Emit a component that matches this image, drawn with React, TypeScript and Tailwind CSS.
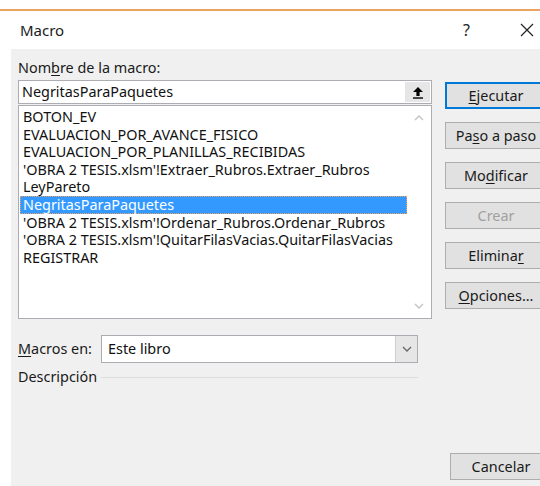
import React from "react";

const macros = [
  "BOTON_EV",
  "EVALUACION_POR_AVANCE_FISICO",
  "EVALUACION_POR_PLANILLAS_RECIBIDAS",
  "'OBRA 2 TESIS.xlsm'!Extraer_Rubros.Extraer_Rubros",
  "LeyPareto",
  "NegritasParaPaquetes",
  "'OBRA 2 TESIS.xlsm'!Ordenar_Rubros.Ordenar_Rubros",
  "'OBRA 2 TESIS.xlsm'!QuitarFilasVacias.QuitarFilasVacias",
  "REGISTRAR",
];

const selected = "NegritasParaPaquetes";

function Btn({
  children,
  primary,
  disabled,
}: {
  children: React.ReactNode;
  primary?: boolean;
  disabled?: boolean;
}) {
  return (
    <div
      className={
        "h-[27px] w-[102px] shrink-0 flex items-center justify-center bg-[#e1e1e1] " +
        (primary ? "border-2 border-[#0078d7]" : "border border-[#adadad]") +
        (disabled ? " text-[#a0a0a0]" : " text-[#1a1a1a]")
      }
    >
      {children}
    </div>
  );
}

function ChevronUp() {
  return (
    <svg width="10" height="6" viewBox="0 0 10 6" fill="none">
      <path d="M1 5 L5 1 L9 5" stroke="#c2c2c2" strokeWidth="1.3" />
    </svg>
  );
}

function ChevronDown({ color = "#c2c2c2" }: { color?: string }) {
  return (
    <svg width="10" height="6" viewBox="0 0 10 6" fill="none">
      <path d="M1 1 L5 5 L9 1" stroke={color} strokeWidth="1.3" />
    </svg>
  );
}

export default function App() {
  return (
    <div
      className="w-[540px] h-[486px] bg-white overflow-hidden flex flex-col text-[14.4px] text-[#111]"
      style={{ fontFamily: '"Noto Sans", "Open Sans", sans-serif' }}
    >
      <div className="h-[9px] shrink-0 bg-white" />
      <div className="h-[2px] shrink-0 bg-[#eaa460]" />
      {/* title bar */}
      <div className="h-[38px] shrink-0 flex items-center pl-[20px] pr-[6px]">
        <span className="text-[15px] text-[#1b1b1b]">Macro</span>
        <span className="ml-auto mr-[50px] text-[16px] text-[#222]">?</span>
        <svg width="14" height="14" viewBox="0 0 14 14">
          <path d="M1 1 L13 13 M13 1 L1 13" stroke="#222" strokeWidth="1.2" />
        </svg>
      </div>

      {/* dialog body */}
      <div className="flex-1 ml-[11px] bg-[#f0f0f0] flex pl-[7px] pt-[9px]">
        <div className="w-[414px] shrink-0 flex flex-col">
          <div className="h-[20px] leading-[20px] text-[#1a1a1a]">
            Nom<span className="underline underline-offset-2">b</span>re de la macro:
          </div>
          <div className="mt-[2px] h-[24px] border border-[#abadb3] bg-white flex items-center">
            <span className="pl-[3px] flex-1">NegritasParaPaquetes</span>
            <div className="w-[25px] h-[20px] mr-[1px] bg-[#e6e6e6] flex items-center justify-center">
              <svg width="12" height="13" viewBox="0 0 12 13">
                <path d="M6 1 L11 6 L7.6 6 L7.6 10 L4.4 10 L4.4 6 L1 6 Z" fill="#000" />
                <rect x="1" y="11.3" width="10" height="1.4" fill="#000" />
              </svg>
            </div>
          </div>
          <div className="mt-[1px] h-[214px] border border-[#abadb3] bg-white flex">
            <div className="flex-1 flex flex-col pt-[2px] pl-[1px]">
              {macros.map((m) =>
                m === selected ? (
                  <div
                    key={m}
                    className="h-[17.6px] leading-[16px] pl-[2px] bg-[#3399ff] text-white border border-dotted border-[#f0a060] whitespace-nowrap"
                  >
                    {m}
                  </div>
                ) : (
                  <div key={m} className="h-[17.6px] leading-[17.6px] pl-[3px] whitespace-nowrap">
                    {m}
                  </div>
                )
              )}
            </div>
            <div className="w-[24px] shrink-0 flex flex-col items-center justify-between pt-[9px] pb-[9px]">
              <ChevronUp />
              <ChevronDown />
            </div>
          </div>

          <div className="mt-[16px] flex items-center h-[28px]">
            <span className="w-[83px] text-[#1a1a1a]">
              <span className="underline underline-offset-2">M</span>acros en:
            </span>
            <div className="flex-1 mr-[14px] h-[28px] border border-[#abadb3] bg-white flex items-center">
              <span className="pl-[6px] flex-1">Este libro</span>
              <div className="w-[22px] h-full bg-[#e6e6e6] border-l border-[#cfcfcf] flex items-center justify-center">
                <ChevronDown color="#666" />
              </div>
            </div>
          </div>

          <div className="mt-[5px] flex items-center h-[18px]">
            <span className="w-[83px] text-[#1a1a1a]">Descripción</span>
            <div className="flex-1 mr-[14px] h-px bg-[#dcdcdc]" />
          </div>
        </div>

        {/* command buttons */}
        <div className="ml-[13px] flex flex-col pt-[24px] gap-[13px]">
          <Btn primary>
            <span>
              <span className="underline underline-offset-2">E</span>jecutar
            </span>
          </Btn>
          <Btn>
            <span>
              Pa<span className="underline underline-offset-2">s</span>o a paso
            </span>
          </Btn>
          <Btn>
            <span>
              Mo<span className="underline underline-offset-2">d</span>ificar
            </span>
          </Btn>
          <Btn disabled>Crear</Btn>
          <Btn>
            <span>
              Elimina<span className="underline underline-offset-2">r</span>
            </span>
          </Btn>
          <Btn>
            <span>
              <span className="underline underline-offset-2">O</span>pciones...
            </span>
          </Btn>
          <div className="mt-auto mb-[6px] ml-[5px]">
            <Btn>Cancelar</Btn>
          </div>
        </div>
      </div>
    </div>
  );
}
